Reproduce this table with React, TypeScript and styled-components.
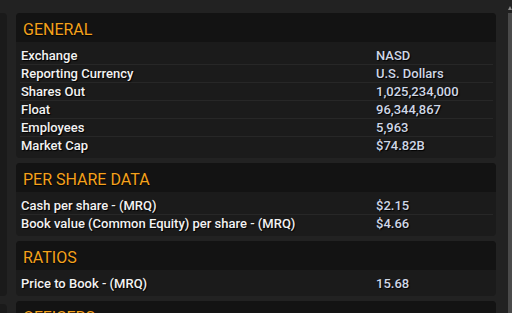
import React from 'react';
import styled, { createGlobalStyle } from 'styled-components';

const GlobalStyle = createGlobalStyle`
  html, body {
    margin: 0;
    padding: 0;
    background: #222222;
    font-family: Roboto, "Liberation Sans", sans-serif;
  }
`;

const Page = styled.div`
  height: 313px;
  overflow: hidden;
  display: flex;
  align-items: flex-start;
`;

const LeftRail = styled.div`
  width: 7px;
  padding-top: 13px;
  display: flex;
  flex-direction: column;
  gap: 8px;
`;

const RailBlock = styled.div<{ $h: number }>`
  height: ${(p) => p.$h}px;
  background: #1a1a1a;
  border-radius: 0 4px 4px 0;
`;

const Main = styled.div`
  width: 480px;
  margin-left: 9px;
  padding-top: 13px;
  display: flex;
  flex-direction: column;
  gap: 5px;
`;

const Panel = styled.section`
  background: #1b1b1b;
  border-radius: 4px;
  overflow: hidden;
`;

const PanelHeader = styled.h2`
  margin: 0;
  height: 29px;
  line-height: 33px;
  padding-left: 7px;
  background: #131313;
  color: #f5a21c;
  font-size: 16px;
  font-weight: 400;
  text-shadow: 0 1px 1px #000;
`;

const PanelBody = styled.div`
  padding: 5px 3px 4px 4px;
`;

const Row = styled.div`
  display: grid;
  grid-template-columns: 355px 1fr;
  height: 17px;
  line-height: 17px;
  padding-left: 1px;
  font-size: 13px;
  font-weight: 500;
  text-shadow: 1px 1px 1px #000;
  & + & {
    border-top: 1px solid #272727;
  }
`;

const Label = styled.span`
  color: #f2f2f2;
`;

const Value = styled.span`
  color: #cfd7e6;
`;

const ScrollTrack = styled.div`
  margin-left: 12px;
  width: 4px;
  height: 313px;
  position: relative;
`;

const ScrollThumb = styled.div`
  position: absolute;
  top: 13px;
  left: 0;
  right: 0;
  bottom: 0;
  background: #4a4a4a;
`;

const ScrollArrow = styled.div`
  position: absolute;
  top: 6px;
  left: 0;
  width: 0;
  height: 0;
  border-left: 2px solid transparent;
  border-right: 2px solid transparent;
  border-bottom: 4px solid #8a8a8a;
`;

type Item = [string, string];

const sections: { title: string; rows: Item[] }[] = [
  {
    title: 'GENERAL',
    rows: [
      ['Exchange', 'NASD'],
      ['Reporting Currency', 'U.S. Dollars'],
      ['Shares Out', '1,025,234,000'],
      ['Float', '96,344,867'],
      ['Employees', '5,963'],
      ['Market Cap', '$74.82B'],
    ],
  },
  {
    title: 'PER SHARE DATA',
    rows: [
      ['Cash per share - (MRQ)', '$2.15'],
      ['Book value (Common Equity) per share - (MRQ)', '$4.66'],
    ],
  },
  {
    title: 'RATIOS',
    rows: [['Price to Book - (MRQ)', '15.68']],
  },
  {
    title: 'OFFICERS',
    rows: [['', '']],
  },
];

const App = () => (
  <>
    <GlobalStyle />
    <Page>
      <LeftRail>
        <RailBlock $h={283} />
        <RailBlock $h={60} />
      </LeftRail>
      <Main>
        {sections.map((s) => (
          <Panel key={s.title}>
            <PanelHeader>{s.title}</PanelHeader>
            <PanelBody>
              {s.rows.map(([label, value], i) => (
                <Row key={i}>
                  <Label>{label}</Label>
                  <Value>{value}</Value>
                </Row>
              ))}
            </PanelBody>
          </Panel>
        ))}
      </Main>
      <ScrollTrack>
        <ScrollArrow />
        <ScrollThumb />
      </ScrollTrack>
    </Page>
  </>
);

export default App;
